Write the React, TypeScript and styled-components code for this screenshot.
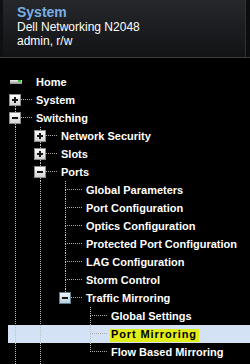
import React from "react";
import styled, { createGlobalStyle } from "styled-components";

const GlobalStyle = createGlobalStyle`
  html, body {
    margin: 0;
    padding: 0;
    background: #000;
  }
  body {
    font-family: "Liberation Sans", Arial, sans-serif;
  }
`;

const vDots = "repeating-linear-gradient(to bottom, #c0c0c0 0 1px, transparent 1px 2px)";
const hDots = "repeating-linear-gradient(to right, #a8a8a8 0 1px, transparent 1px 2px)";

const Page = styled.div`
  width: 250px;
  height: 364px;
  overflow: hidden;
  background: #000;
`;

const Header = styled.header`
  height: 58px;
  box-sizing: border-box;
  padding: 4px 0 0 17px;
  background: linear-gradient(#25272b, #121315);
  border-bottom: 1px solid #3a3b3e;
  box-shadow: inset -4px 0 0 #0c0d0e, inset -5px 0 0 #2e3034, inset 3px 0 0 #0f1012;
`;

const Title = styled.div`
  color: #79afe4;
  font: bold 14px/16px "Liberation Sans", Arial, sans-serif;
`;

const SubLine = styled.div`
  color: #fff;
  font: 12px/14px "Liberation Sans", Arial, sans-serif;
`;

const Tree = styled.div`
  margin: 15px 0 0 8px;
`;

const Row = styled.div<{ $selected?: boolean }>`
  display: flex;
  align-items: center;
  height: 18px;
  background: ${({ $selected }) => ($selected ? "#d3e3f5" : "transparent")};
`;

const Indent = styled.div<{ $guide: boolean }>`
  flex: none;
  align-self: stretch;
  width: 25px;
  background: ${({ $guide }) => ($guide ? `${vDots} 7px 0 / 1px 100% no-repeat` : "none")};
`;

const Joint = styled.div<{ $top: boolean; $bottom: boolean; $connector: boolean }>`
  flex: none;
  align-self: stretch;
  width: 27px;
  box-sizing: border-box;
  padding-left: 1px;
  display: flex;
  align-items: center;
  background: ${({ $top, $bottom, $connector }) => {
    const layers: string[] = [];
    if ($top) layers.push(`${vDots} 7px 0 / 1px 9px no-repeat`);
    if ($bottom) layers.push(`${vDots} 7px 9px / 1px 9px no-repeat`);
    if ($connector) layers.push(`${hDots} 7px 8px / 18px 1px no-repeat`);
    return layers.length ? layers.join(", ") : "none";
  }};
`;

const Toggle = styled.span<{ $hot?: boolean }>`
  width: 12px;
  height: 12px;
  box-sizing: border-box;
  display: grid;
  place-items: center;
  border: 1px solid ${({ $hot }) => ($hot ? "#5f7d92" : "#8c8c8c")};
  background: ${({ $hot }) =>
    $hot ? "linear-gradient(#eef4f8, #b9cddb)" : "linear-gradient(#fdfdfd, #d4d4d4)"};
`;

const Bar = styled.span<{ $vertical?: boolean }>`
  grid-area: 1 / 1;
  width: ${({ $vertical }) => ($vertical ? "2px" : "6px")};
  height: ${({ $vertical }) => ($vertical ? "6px" : "2px")};
  background: #151515;
`;

const HomeIcon = styled.span`
  width: 12px;
  height: 4px;
  margin-left: 1px;
  display: flex;
  justify-content: flex-end;
  background: linear-gradient(#f2f2f2, #8e8e8e);
`;

const HomeLed = styled.span`
  width: 3px;
  height: 2px;
  margin-right: 1px;
  background: #36c33a;
`;

const Label = styled.span<{ $selected?: boolean }>`
  white-space: nowrap;
  font: bold 11px/12px "Liberation Sans", Arial, sans-serif;
  padding: 0 1px;
  color: #fff;
  ${({ $selected }) =>
    $selected &&
    `
    align-self: flex-start;
    margin-top: 4px;
    line-height: 11px;
    padding: 0 2px 2px 1px;
    letter-spacing: 0.9px;
    color: #000;
    background: #e2ee17;
  `}
`;

type MenuNode = {
  label: string;
  toggle?: "plus" | "minus";
  hot?: boolean;
  selected?: boolean;
  children?: MenuNode[];
};

const menu: MenuNode[] = [
  { label: "System", toggle: "plus" },
  {
    label: "Switching",
    toggle: "minus",
    children: [
      { label: "Network Security", toggle: "plus" },
      { label: "Slots", toggle: "plus" },
      {
        label: "Ports",
        toggle: "minus",
        children: [
          { label: "Global Parameters" },
          { label: "Port Configuration" },
          { label: "Optics Configuration" },
          { label: "Protected Port Configuration" },
          { label: "LAG Configuration" },
          { label: "Storm Control" },
          {
            label: "Traffic Mirroring",
            toggle: "minus",
            hot: true,
            children: [
              { label: "Global Settings" },
              { label: "Port Mirroring", selected: true },
              { label: "Flow Based Mirroring" },
            ],
          },
        ],
      },
      { label: "Address Tables", toggle: "plus" },
    ],
  },
  { label: "Routing", toggle: "plus" },
];

type FlatRow = {
  node: MenuNode;
  depth: number;
  guides: boolean[];
  top: boolean;
  bottom: boolean;
};

const flatten = (nodes: MenuNode[], depth: number, guides: boolean[]): FlatRow[] =>
  nodes.flatMap((node, i) => {
    const last = i === nodes.length - 1;
    const row: FlatRow = { node, depth, guides, top: depth > 1 || i > 0, bottom: !last };
    const kids =
      node.toggle === "minus" && node.children ? flatten(node.children, depth + 1, [...guides, !last]) : [];
    return [row, ...kids];
  });

const TreeRow: React.FC<{ row: FlatRow }> = ({ row }) => {
  const { node } = row;
  return (
    <Row $selected={node.selected}>
      {row.guides.map((g, i) => (
        <Indent key={i} $guide={g} />
      ))}
      <Joint $top={row.top} $bottom={row.bottom} $connector>
        {node.toggle && (
          <Toggle $hot={node.hot}>
            <Bar />
            {node.toggle === "plus" && <Bar $vertical />}
          </Toggle>
        )}
      </Joint>
      <Label $selected={node.selected}>{node.label}</Label>
    </Row>
  );
};

export default function App() {
  const rows = flatten(menu, 1, []);
  return (
    <Page>
      <GlobalStyle />
      <Header>
        <Title>System</Title>
        <SubLine>Dell Networking N2048</SubLine>
        <SubLine>admin, r/w</SubLine>
      </Header>
      <Tree>
        <Row>
          <Joint $top={false} $bottom={false} $connector={false}>
            <HomeIcon>
              <HomeLed />
            </HomeIcon>
          </Joint>
          <Label>Home</Label>
        </Row>
        {rows.map((row, i) => (
          <TreeRow key={i} row={row} />
        ))}
      </Tree>
    </Page>
  );
}
